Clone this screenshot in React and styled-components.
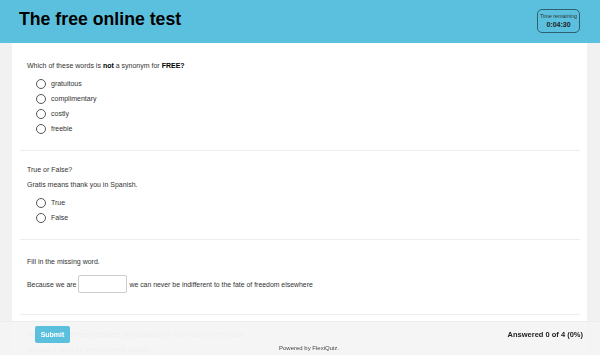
import styled, { createGlobalStyle } from 'styled-components';

const GlobalStyle = createGlobalStyle`
  html, body {
    margin: 0;
    padding: 0;
    background: #f1f1f1;
    font-family: "Liberation Sans", Arial, sans-serif;
    color: #333;
  }
  * { box-sizing: border-box; }
`;

const questions = [
  {
    id: 1,
    lines: [
      <>Which of these words is <b>not</b> a synonym for <b>FREE?</b></>,
    ],
    options: ['gratuitous', 'complimentary', 'costly', 'freebie'],
    top: 18,
  },
  {
    id: 2,
    lines: ['True or False?', 'Gratis means thank you in Spanish.'],
    options: ['True', 'False'],
    top: 14,
  },
];

export default function App() {
  return (
    <>
      <GlobalStyle />
      <Header>
        <Title>The free online test</Title>
        <Timer>
          <TimerLabel>Time remaining</TimerLabel>
          <TimerValue>0:04:30</TimerValue>
        </Timer>
      </Header>
      <Main>
        {questions.map((q) => (
          <Question key={q.id} $top={q.top}>
            {q.lines.map((line, i) => (
              <Text key={i}>{line}</Text>
            ))}
            <Options>
              {q.options.map((opt) => (
                <Option key={opt}>
                  <Radio />
                  <span>{opt}</span>
                </Option>
              ))}
            </Options>
          </Question>
        ))}
        <Question $top={17} $bottom={21}>
          <Text>Fill in the missing word.</Text>
          <FillRow>
            <span>Because we are</span>
            <Blank type="text" />
            <span>we can never be indifferent to the fate of freedom elsewhere</span>
          </FillRow>
        </Question>
        <Question $top={15} $bottom={30} $last>
          <Text $faded>Select which of these features are available on the FlexiQuiz free plan.</Text>
          <Text $faded>You get 1 point for every correct answer.</Text>
        </Question>
      </Main>
      <Footer>
        <FooterRow>
          <Submit>Submit</Submit>
          <Answered>Answered 0 of 4 (0%)</Answered>
        </FooterRow>
        <Powered>Powered by FlexiQuiz.</Powered>
      </Footer>
    </>
  );
}

const Header = styled.header`
  height: 43px;
  background: #5bc0de;
  display: flex;
  align-items: flex-start;
  justify-content: space-between;
  padding: 0 20px 0 19px;
`;

const Title = styled.h1`
  margin: 0;
  padding-top: 9px;
  font-size: 17.7px;
  line-height: 20px;
  font-weight: 700;
  color: #000;
`;

const Timer = styled.div`
  margin-top: 9px;
  width: 43px;
  height: 24px;
  border: 1px solid #2f5f70;
  border-radius: 5px;
  display: flex;
  flex-direction: column;
  align-items: center;
  padding-top: 2px;
`;

const TimerLabel = styled.div`
  font-size: 5.4px;
  line-height: 8px;
  color: #333;
  white-space: nowrap;
`;

const TimerValue = styled.div`
  font-size: 7px;
  line-height: 10px;
  font-weight: 700;
  color: #222;
`;

const Main = styled.main`
  background: #fff;
  margin: 0 13px 0 12px;
  padding: 0 7px 0 8px;
`;

const Question = styled.section`
  padding: ${(p) => p.$top}px 7px ${(p) => p.$bottom ?? 14}px;
  border-bottom: ${(p) => (p.$last ? 'none' : '1px solid #eeeeee')};
`;

const Text = styled.p`
  margin: 0 0 5px;
  font-size: 7px;
  line-height: 10px;
  color: ${(p) => (p.$faded ? '#c8c8c8' : '#333')};
  &:last-of-type { margin-bottom: 0; }
  b { color: #000; }
`;

const Options = styled.div`
  margin-top: 5px;
  padding-left: 9px;
`;

const Option = styled.label`
  display: flex;
  align-items: center;
  height: 15px;
  font-size: 7px;
  gap: 5px;
`;

const Radio = styled.span`
  width: 10px;
  height: 10px;
  border-radius: 50%;
  border: 1px solid #555;
  background: #fff;
  flex-shrink: 0;
`;

const FillRow = styled.div`
  margin-top: 8px;
  display: flex;
  align-items: center;
  gap: 2px;
  font-size: 6.9px;
`;

const Blank = styled.input`
  width: 49px;
  height: 18px;
  border: 1px solid #ccc;
  border-radius: 2px;
  margin: 0;
  padding: 0 4px;
  background: #fff;
`;

const Footer = styled.footer`
  position: fixed;
  left: 0;
  right: 0;
  bottom: 0;
  height: 34px;
  background: rgba(244, 244, 244, 0.88);
  border-top: 1px solid #ececec;
  padding: 4px 17px 0 35px;
`;

const FooterRow = styled.div`
  display: flex;
  justify-content: space-between;
  align-items: center;
`;

const Submit = styled.button`
  width: 35px;
  height: 17px;
  border: none;
  border-radius: 2px;
  background: #5bc0de;
  color: #fff;
  font-family: inherit;
  font-size: 7px;
  font-weight: 700;
  padding: 0;
`;

const Answered = styled.div`
  font-size: 7.5px;
  font-weight: 700;
  color: #222;
`;

const Powered = styled.div`
  margin-top: 1px;
  text-align: center;
  font-size: 6px;
  line-height: 8px;
  color: #444;
`;
